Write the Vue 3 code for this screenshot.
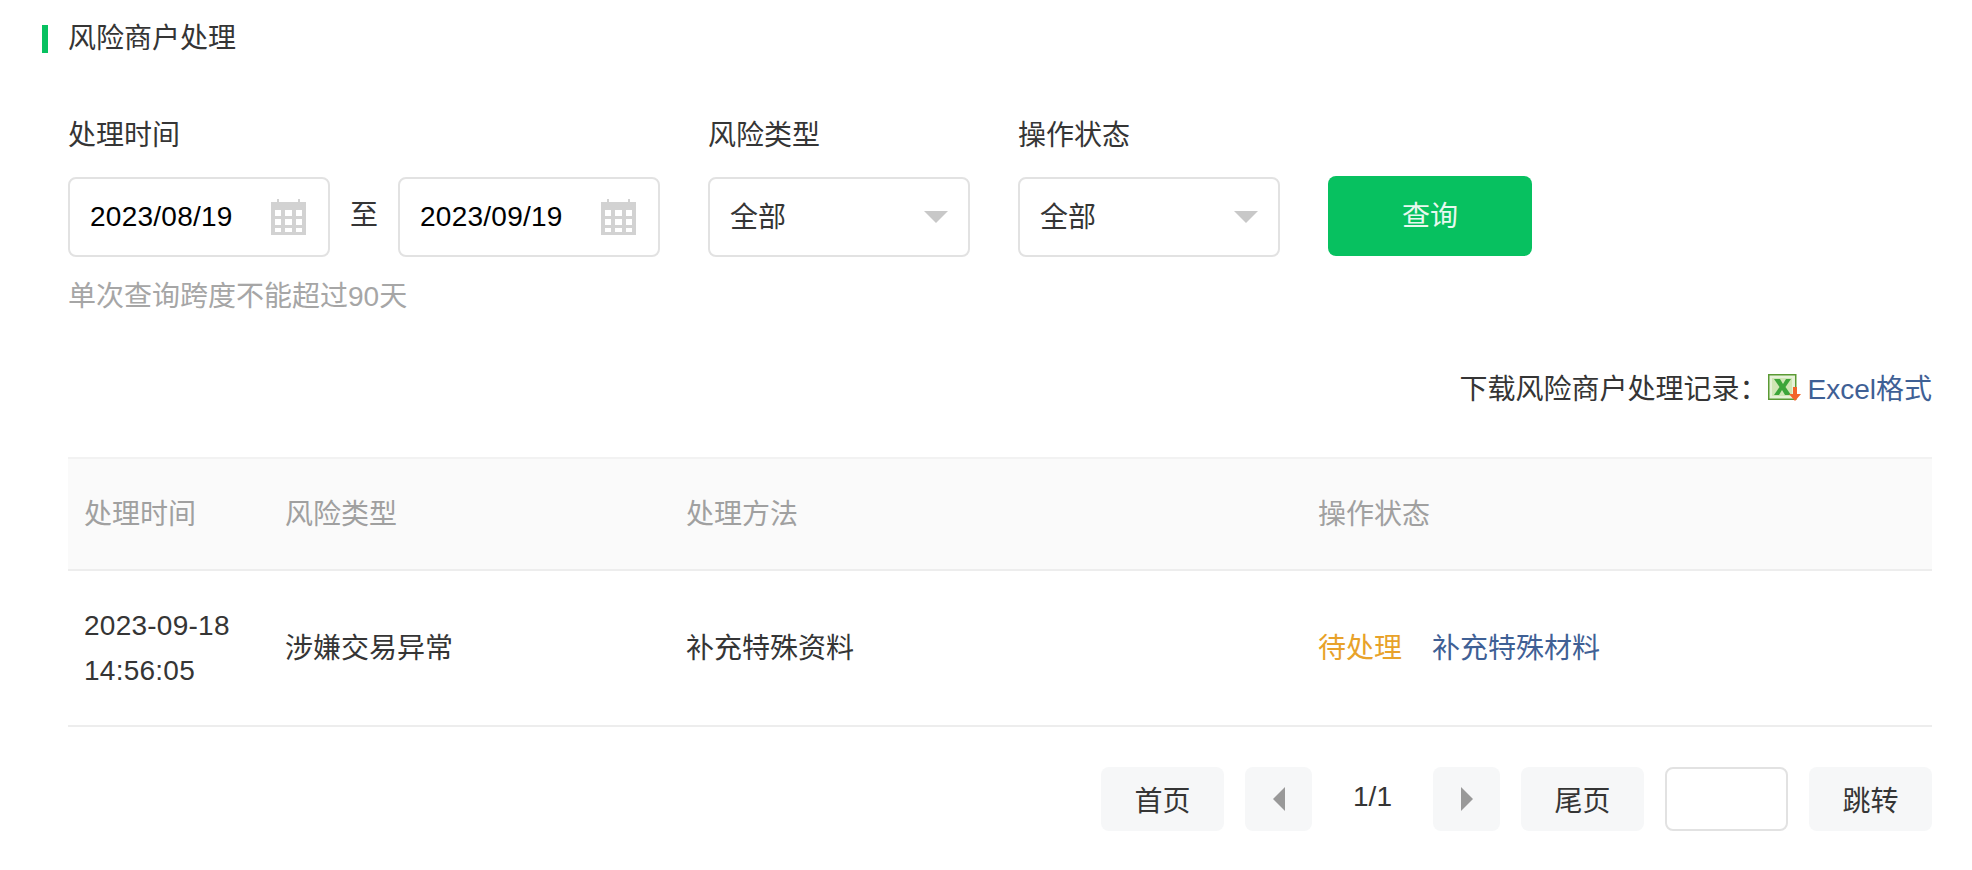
<script setup>
const dateRanges = ['2023/08/19', '2023/09/19']
const headers = ['处理时间', '风险类型', '处理方法', '操作状态']
</script>

<template>
  <div class="page">
    <h2 class="title">风险商户处理</h2>

    <form class="filters" @submit.prevent>
      <div class="field">
        <label class="label">处理时间</label>
        <div class="range">
          <template v-for="(d, i) in dateRanges" :key="d">
            <span v-if="i === 1" class="to">至</span>
            <div class="box">
              <span class="value date">{{ d }}</span>
              <svg class="cal" width="35" height="36" viewBox="0 0 35 36">
                <path fill-rule="evenodd" fill="#d2d2d2" d="M0 3h6V0h2v3h19V0h2v3h6v33H0zM4 11v6h6v-6zM14 11v6h7v-6zM25 11v6h6v-6zM4 20v6h6v-6zM14 20v6h7v-6zM25 20v6h6v-6zM4 29v4h6v-4zM14 29v4h7v-4zM25 29v4h6v-4z" />
              </svg>
            </div>
          </template>
        </div>
        <p class="hint">单次查询跨度不能超过90天</p>
      </div>
      <div class="field select-field">
        <label class="label">风险类型</label>
        <div class="box">
          <span class="value cjk">全部</span>
          <i class="caret"></i>
        </div>
      </div>
      <div class="field select-field">
        <label class="label">操作状态</label>
        <div class="box">
          <span class="value cjk">全部</span>
          <i class="caret"></i>
        </div>
      </div>
      <button class="query" type="button">查询</button>
    </form>

    <div class="download">
      <span>下载风险商户处理记录：</span>
      <svg class="xls" width="34" height="27" viewBox="0 0 34 27">
        <rect x="0.75" y="0.75" width="27" height="24.500" fill="#e6f2d8" stroke="#5b9a34" stroke-width="1.500" />
        <rect x="4" y="4" width="20" height="18" fill="#cfe6b4" />
        <path fill="#3da53a" d="M6 5h6l3 5 3-5h5l-5.500 8 5.500 8h-6l-3-5-3 5H6l5.500-8z" />
        <path fill="#f2642a" d="M25 13h4v7h4l-6 7-6-7h4z" />
      </svg>
      <a class="link excel">Excel格式</a>
    </div>

    <table class="records">
      <colgroup>
        <col class="c1" /><col class="c2" /><col class="c3" /><col />
      </colgroup>
      <thead>
        <tr><th v-for="h in headers" :key="h">{{ h }}</th></tr>
      </thead>
      <tbody>
        <tr>
          <td class="time">2023-09-18<br />14:56:05</td>
          <td>涉嫌交易异常</td>
          <td>补充特殊资料</td>
          <td><span class="pending">待处理</span><a class="link">补充特殊材料</a></td>
        </tr>
      </tbody>
    </table>

    <nav class="pager">
      <button class="pg wide" type="button">首页</button>
      <button class="pg arrow" type="button"><i class="tri left"></i></button>
      <span class="count">1/1</span>
      <button class="pg arrow" type="button"><i class="tri right"></i></button>
      <button class="pg wide" type="button">尾页</button>
      <input class="jump" type="text" />
      <button class="pg wide" type="button">跳转</button>
    </nav>
  </div>
</template>

<style>
html, body { margin: 0; background: #fff; }
</style>

<style scoped>
.page {
  box-sizing: border-box;
  width: 1972px;
  height: 870px;
  overflow: hidden;
  padding: 25px 40px 0 42px;
  font-family: "Liberation Sans", "Noto Sans CJK SC", sans-serif;
  font-size: 28px;
  color: #353535;
}
.title {
  margin: 0;
  height: 28px;
  line-height: 28px;
  border-left: 6px solid #07c160;
  padding-left: 20px;
  font-size: 28px;
  font-weight: 400;
}
.filters {
  display: flex;
  align-items: flex-start;
  margin: 0;
  padding: 63px 0 0 26px;
}
.field { display: flex; flex-direction: column; }
.select-field { margin-left: 48px; }
.label { height: 40px; line-height: 40px; margin-bottom: 21px; }
.range { display: flex; align-items: center; }
.to { width: 68px; text-align: center; padding-bottom: 8px; }
.box {
  box-sizing: border-box;
  width: 262px;
  height: 80px;
  border: 2px solid #e2e2e2;
  border-radius: 8px;
  display: flex;
  align-items: center;
  justify-content: space-between;
  padding: 0 20px;
  background: #fff;
}
.value { color: #353535; }
.cjk { padding-bottom: 5px; }
.date { color: #000; letter-spacing: 0.25px; }
.cal { display: block; margin-right: 2px; }
.caret {
  width: 0;
  height: 0;
  border-left: 12px solid transparent;
  border-right: 12px solid transparent;
  border-top: 12px solid #c8c8c8;
}
.hint { margin: 20px 0 0; height: 40px; line-height: 40px; color: #a6a6a6; }
.query {
  width: 204px;
  height: 80px;
  margin: 60px 0 0 48px;
  border: 0;
  border-radius: 8px;
  background: #07c160;
  color: #e8f8ef;
  font: inherit;
  padding: 0 0 4px;
}
.download {
  display: flex;
  align-items: center;
  justify-content: flex-end;
  margin-top: 50px;
  height: 40px;
}
.xls { margin: 0 6px 0 0; display: block; }
.link { color: #3f6095; }
.excel { white-space: nowrap; }
.records {
  width: 1864px;
  margin: 50px 0 0 26px;
  border-collapse: collapse;
  table-layout: fixed;
}
.c1 { width: 201px; }
.c2 { width: 401px; }
.c3 { width: 632px; }
th, td {
  padding: 0 16px;
  text-align: left;
  font-weight: 400;
}
th {
  height: 106px;
  padding-bottom: 4px;
  background: #fafafa;
  color: #a0a0a0;
  border-top: 2px solid #f2f2f2;
  border-bottom: 2px solid #ededed;
}
td {
  height: 154px;
  line-height: 45px;
  border-bottom: 2px solid #ededed;
}
.time { letter-spacing: 0.25px; }
.pending { color: #e8a22a; margin-right: 30px; }
.pager {
  display: flex;
  align-items: center;
  justify-content: flex-end;
  gap: 21px;
  margin-top: 40px;
}
.pg {
  height: 64px;
  border: 0;
  border-radius: 8px;
  background: #f6f7f8;
  color: #353535;
  font: inherit;
  padding: 0;
}
.wide { width: 123px; }
.arrow { width: 67px; display: flex; align-items: center; justify-content: center; }
.count { width: 79px; text-align: center; padding-bottom: 4px; }
.tri {
  width: 0;
  height: 0;
  border-top: 12px solid transparent;
  border-bottom: 12px solid transparent;
}
.left { border-right: 12px solid #999; }
.right { border-left: 12px solid #999; }
.jump {
  box-sizing: border-box;
  width: 123px;
  height: 64px;
  border: 2px solid #e2e2e2;
  border-radius: 8px;
  background: #fff;
  outline: none;
  padding: 0;
}
</style>
